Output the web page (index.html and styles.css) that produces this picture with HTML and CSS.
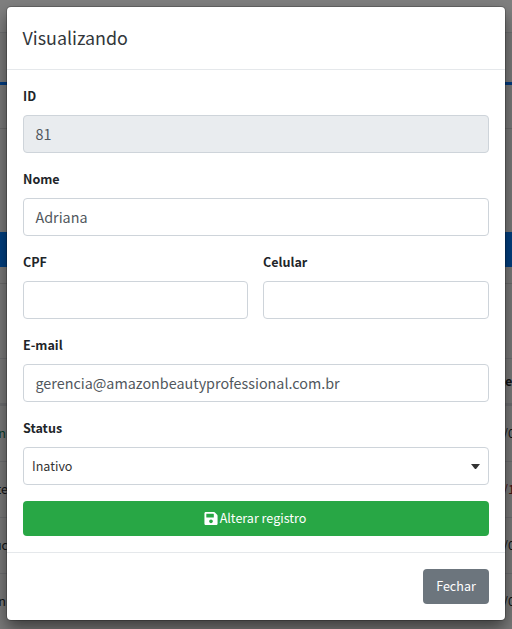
FILE: index.html
```html
<!DOCTYPE html>
<html lang="pt-BR">
<head>
<meta charset="utf-8">
<title>Visualizando</title>
<link rel="stylesheet" href="styles.css">
</head>
<body>
<div class="page">
  <div class="navbar"></div>
  <div class="card-top"></div>
  <div class="card-head"></div>
  <div class="filters"></div>
  <div class="action-bar"></div>
  <div class="gap"></div>
  <div class="tools"></div>
  <div class="row head"><span></span><b>te</b></div>
  <div class="row"><span class="ok short">n</span><span>/0</span></div>
  <div class="row"><span>te</span><span class="bad">/1</span></div>
  <div class="row"><span>uc</span><span>/0</span></div>
  <div class="row"><span class="short">n</span><span>/0</span></div>
</div>
<div class="modal">
  <header class="modal-header"><h5>Visualizando</h5></header>
  <div class="modal-body">
    <div class="group"><label>ID</label><div class="control disabled">81</div></div>
    <div class="group"><label>Nome</label><div class="control">Adriana</div></div>
    <div class="pair">
      <div class="group"><label>CPF</label><div class="control"></div></div>
      <div class="group"><label>Celular</label><div class="control"></div></div>
    </div>
    <div class="group"><label>E-mail</label><div class="control">gerencia@amazonbeautyprofessional.com.br</div></div>
    <div class="group"><label>Status</label><div class="control select"><span>Inativo</span><i class="caret"></i></div></div>
    <button class="btn save"><svg viewBox="0 0 448 512" width="14" height="15"><path fill="currentColor" d="M433.900 129.900l-83.900-83.900A48 48 0 0 0 316.100 32H48C21.500 32 0 53.500 0 80v352c0 26.500 21.500 48 48 48h352c26.500 0 48-21.500 48-48V163.900a48 48 0 0 0-14.100-34zM224 416c-35.300 0-64-28.700-64-64s28.700-64 64-64 64 28.700 64 64-28.700 64-64 64zm96-304.500V212c0 6.600-5.400 12-12 12H76c-6.600 0-12-5.400-12-12V108c0-6.600 5.400-12 12-12h228.500c3.200 0 6.200 1.300 8.500 3.500l3.500 3.500a12 12 0 0 1 3.500 8.500z"/></svg><span>Alterar registro</span></button>
  </div>
  <footer class="modal-footer"><button class="btn close"><span>Fechar</span></button></footer>
</div>
</body>
</html>
```
FILE: styles.css
```css
* { box-sizing: border-box; }
body {
  margin: 0;
  height: 629px;
  overflow: hidden;
  position: relative;
  background: #7a7a7a;
  font-family: "Noto Sans CJK SC", "Noto Sans", sans-serif;
  font-size: 12.55px;
  color: #212529;
}
.page { height: 629px; overflow: hidden; }
.navbar { height: 33px; background: #7f7f7f; border-bottom: 1px solid #6f7072; }
.card-top { height: 52px; border-bottom: 3px solid #003b80; }
.card-head { height: 44px; border-bottom: 1px solid #6b6b6b; }
.filters { height: 103px; }
.action-bar { height: 35px; background: #003f80; }
.gap { height: 17px; border-bottom: 1px solid #6b6b6b; }
.tools { height: 74px; }
.row {
  height: 56px;
  display: flex;
  justify-content: space-between;
  align-items: center;
  padding-bottom: 2px;
  border-top: 1px solid #6d6e70;
  color: #101214;
  white-space: nowrap;
}
.row.head { height: 47px; border-bottom: 2px solid #6d6e70; }
.row span:first-child { width: 8px; display: flex; justify-content: flex-end; }
.row .short:first-child { padding-right: 2px; }
.row > :last-child { width: 9px; }
.row.head > :last-child { width: 12px; }
.row .ok { color: #0b3d2b; }
.row .bad { color: #4a1010; }
.modal {
  position: absolute;
  left: 7px;
  top: 7px;
  width: 498px;
  height: 613px;
  background: #fff;
  border-radius: 4px;
  box-shadow: 0 0 0 1px rgba(0,0,0,.2), 0 8px 16px rgba(0,0,0,.5);
}
.modal-header { height: 63px; padding: 15px 15.5px; border-bottom: 1px solid #e5e8eb; }
h5 { margin: 0; font-size: 17.9px; line-height: 30px; font-weight: 400; color: #33373b; }
.modal-body { padding: 16px; height: 483px; border-bottom: 1px solid #e5e8eb; }
.group { height: 83px; }
label { display: block; height: 29px; line-height: 20px; font-weight: 700; }
.control {
  height: 38px;
  border: 1px solid #ced4da;
  border-radius: 4px;
  padding: 0 11.5px;
  font-size: 14.35px;
  line-height: 35px;
  color: #51575d;
}
.disabled { background: #e9ecef; }
.pair { display: grid; grid-template-columns: 225px 226px; gap: 15px; }
.select { display: flex; justify-content: space-between; align-items: center; padding: 0 8px; font-size: 12.55px; color: #333; }
.select span { padding-bottom: 1px; }
.caret { border: 4.5px solid transparent; border-top: 5px solid #333; border-bottom: 0; width: 9px; }
.btn {
  display: flex;
  align-items: center;
  justify-content: center;
  height: 35px;
  border: 0;
  border-radius: 4px;
  padding: 0 13px 1px;
  font: inherit;
  line-height: 21px;
  color: #fff;
}
.btn span { padding-bottom: 2px; }
.save { width: 100%; gap: 2px; padding-right: 15px; background: #28a745; }
.modal-footer { display: flex; justify-content: flex-end; padding: 16px; }
.close { width: 66px; background: #6c757d; }
```
